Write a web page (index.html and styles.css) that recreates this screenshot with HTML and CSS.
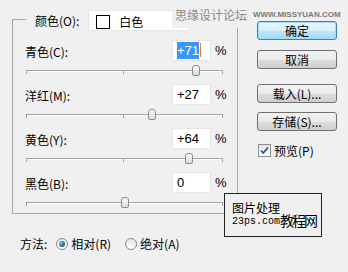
FILE: index.html
```html
<!DOCTYPE html>
<html lang="zh-CN">
<head>
    <meta charset="UTF-8">
    <title>可选颜色</title>
    <link rel="stylesheet" href="styles.css">
</head>
<body>
    <div class="dialog">
        <div class="main">
            <div class="group">
                <div class="legend">
                    <span class="legend-label">颜色(O):</span>
                    <div class="dropdown">
                        <span class="swatch"></span>
                        <span class="dropdown-text">白色</span>
                        <span class="dropdown-arrow"></span>
                    </div>
                </div>

                <div class="channels">
                    <div class="channel">
                        <div class="channel-head">
                            <span class="channel-label">青色(C):</span>
                            <div class="field"><span class="selected">+71</span><span class="caret"></span></div>
                            <span class="unit">%</span>
                        </div>
                        <div class="slider"><span class="thumb" style="left: 166px"></span></div>
                    </div>
                    <div class="channel">
                        <div class="channel-head">
                            <span class="channel-label">洋红(M):</span>
                            <div class="field">+27</div>
                            <span class="unit">%</span>
                        </div>
                        <div class="slider"><span class="thumb" style="left: 122px"></span></div>
                    </div>
                    <div class="channel">
                        <div class="channel-head">
                            <span class="channel-label">黄色(Y):</span>
                            <div class="field">+64</div>
                            <span class="unit">%</span>
                        </div>
                        <div class="slider"><span class="thumb" style="left: 159px"></span></div>
                    </div>
                    <div class="channel">
                        <div class="channel-head">
                            <span class="channel-label">黑色(B):</span>
                            <div class="field">0</div>
                            <span class="unit">%</span>
                        </div>
                        <div class="slider"><span class="thumb" style="left: 95px"></span></div>
                    </div>
                </div>
            </div>

            <div class="method">
                <span class="method-label">方法:</span>
                <span class="radio-option"><span class="radio checked"></span>相对(R)</span>
                <span class="radio-option"><span class="radio"></span>绝对(A)</span>
            </div>
        </div>

        <div class="actions">
            <button class="btn btn-default btn-ok">确定</button>
            <button class="btn btn-cancel">取消</button>
            <button class="btn btn-load">载入(L)...</button>
            <button class="btn btn-save">存储(S)...</button>
            <div class="preview">
                <span class="checkbox">
                    <svg width="11" height="11" viewBox="0 0 11 11"><path d="M2 5.5 L4.3 8 L9 2.5" fill="none" stroke="#2c4f96" stroke-width="1.8"/></svg>
                </span>
                预览(P)
            </div>
        </div>
    </div>

    <!-- watermarks -->
    <div class="mark-cn">思缘设计论坛</div>
    <div class="mark-url">WWW.MISSYUAN.COM</div>
    <div class="mark-box">
        <div class="mark-line1">图片处理</div>
        <div class="mark-line2"><span class="mark-domain">23ps.com</span><span class="mark-big">教程网</span></div>
    </div>
</body>
</html>
```

FILE: styles.css
```css
* {
    box-sizing: border-box;
}

body {
    margin: 0;
    width: 348px;
    height: 272px;
    overflow: hidden;
    position: relative;
    background: #f0f0f0;
    color: #000;
    font: 12px/16px "Noto Sans CJK SC", "Liberation Sans", sans-serif;
}

.dialog {
    display: flex;
}

.main {
    padding: 19px 0 0 12px;
}

/* group box */
.group {
    width: 226px;
    height: 195px;
    border: 1px solid #a8a8a8;
    padding-left: 12px;
}

.legend {
    display: flex;
    align-items: center;
    width: max-content;
    height: 21px;
    margin: -10px 0 0 1px;
    padding-left: 9px;
    background: #f0f0f0;
}

.legend-label {
    margin-right: 9px;
}

.dropdown {
    position: relative;
    display: flex;
    align-items: center;
    width: 101px;
    height: 21px;
    padding-left: 7px;
    background: #fff;
    border: 1px solid #e6e6e6;
}

.swatch {
    width: 14px;
    height: 14px;
    border: 1px solid #000;
    background: #fff;
    margin-top: 2px;
}

.dropdown-text {
    margin-left: 9px;
    margin-top: 2px;
}

.dropdown-arrow {
    position: absolute;
    right: 5px;
    top: 10px;
    border-top: 4px solid #222;
    border-left: 3px solid transparent;
    border-right: 3px solid transparent;
}

.channels {
    margin-top: 9px;
}

.channel {
    height: 44px;
}

.channel-head {
    display: grid;
    grid-template-columns: 147px 39px auto;
    align-items: center;
    height: 21px;
}

.channel-label {
    margin-top: 2px;
}

.field {
    height: 21px;
    padding-left: 4px;
    background: #fff;
    border: 1px solid #e6e6e6;
    font: 13px/19px "Liberation Sans", sans-serif;
}

.selected {
    background: #3399ff;
    color: #fff;
    padding: 1px 0;
}

.caret {
    display: inline-block;
    width: 1px;
    height: 14px;
    margin-left: 1px;
    vertical-align: -2px;
    background: #d08a2c;
}

.unit {
    margin-left: 4px;
    font: 13px/19px "Liberation Sans", sans-serif;
}

/* slider */
.slider {
    position: relative;
    width: 197px;
    height: 23px;
    margin-left: 1px;
}

.slider::before {
    content: "";
    position: absolute;
    left: 0;
    right: 0;
    top: 9px;
    height: 2px;
    background: linear-gradient(#a4a4a4 50%, #fdfdfd 50%);
}

.slider::after {
    content: "";
    position: absolute;
    left: 0;
    right: 0;
    top: 9px;
    height: 4px;
    background:
        linear-gradient(#a4a4a4, #a4a4a4) left / 1px 100% no-repeat,
        linear-gradient(#a4a4a4, #a4a4a4) 49.5% 0 / 1px 100% no-repeat,
        linear-gradient(#a4a4a4, #a4a4a4) right / 1px 100% no-repeat;
}

.thumb {
    position: absolute;
    top: 4px;
    z-index: 1;
    width: 8px;
    height: 11px;
    border: 1px solid #8c8c8c;
    border-radius: 3px 3px 2px 2px;
    background: linear-gradient(#fdfdfd, #dadada);
}

/* method row */
.method {
    display: flex;
    align-items: center;
    height: 16px;
    margin-top: 22px;
    padding-left: 8px;
}

.radio-option {
    display: flex;
    align-items: center;
    gap: 3px;
    margin-left: 9px;
}

.radio-option + .radio-option {
    margin-left: 14px;
}

.radio {
    position: relative;
    width: 12px;
    height: 12px;
    border: 1px solid #8a8a8a;
    border-radius: 50%;
    background: linear-gradient(#e6e6e6, #ffffff);
}

.radio.checked::after {
    content: "";
    position: absolute;
    left: 2px;
    top: 2px;
    width: 6px;
    height: 6px;
    border-radius: 50%;
    background: radial-gradient(circle at 35% 35%, #7fd0f0, #1b6a96 55%, #0f3e5e);
}

/* buttons */
.actions {
    display: flex;
    flex-direction: column;
    width: 80px;
    margin-left: 19px;
    padding-top: 21px;
}

.btn {
    width: 80px;
    height: 19px;
    padding: 0;
    font: inherit;
    color: #000;
    border: 1px solid #707070;
    border-radius: 3px;
    background: linear-gradient(#f2f2f2 0%, #ebebeb 50%, #dddddd 51%, #cfcfcf 100%);
}

.btn-default {
    border-color: #3c7fb1;
    box-shadow: inset 0 0 0 1px #9fdcf8;
    background: linear-gradient(#eaf6fd 0%, #d9f0fc 50%, #bee6fd 51%, #a7d9f5 100%);
}

.btn-cancel {
    margin-top: 10px;
}

.btn-load {
    margin-top: 15px;
}

.btn-save {
    margin-top: 9px;
}

.preview {
    display: flex;
    align-items: center;
    gap: 3px;
    height: 13px;
    margin-top: 13px;
    padding-left: 1px;
}

.checkbox {
    display: flex;
    align-items: center;
    justify-content: center;
    width: 13px;
    height: 13px;
    border: 1px solid #8f8f8f;
    background: linear-gradient(#e4e4e4, #ffffff);
}

/* watermarks lying over the dialog */
.mark-cn {
    position: absolute;
    left: 172px;
    top: 6px;
    width: 76px;
    height: 22px;
    padding: 2px 0 0 3px;
    background: #f0f0f0;
    color: #8a8a8a;
    font-size: 12px;
    line-height: 14px;
}

.mark-url {
    position: absolute;
    left: 253px;
    top: 11px;
    color: #7a7a7a;
    font: bold 8px/8px "Liberation Sans", sans-serif;
}

.mark-box {
    position: absolute;
    left: 224px;
    top: 193px;
    width: 98px;
    height: 44px;
    padding: 7px 0 0 7px;
    border: 1px solid #222;
    background: #f0f0f0;
}

.mark-line1 {
    font-size: 12px;
    line-height: 14px;
}

.mark-line2 {
    display: flex;
    align-items: flex-end;
    margin-top: -4px;
}

.mark-domain {
    font: 10px/12px "Liberation Mono", monospace;
    padding-bottom: 1px;
}

.mark-big {
    font-size: 14px;
    line-height: 18px;
    letter-spacing: -2px;
}
```
